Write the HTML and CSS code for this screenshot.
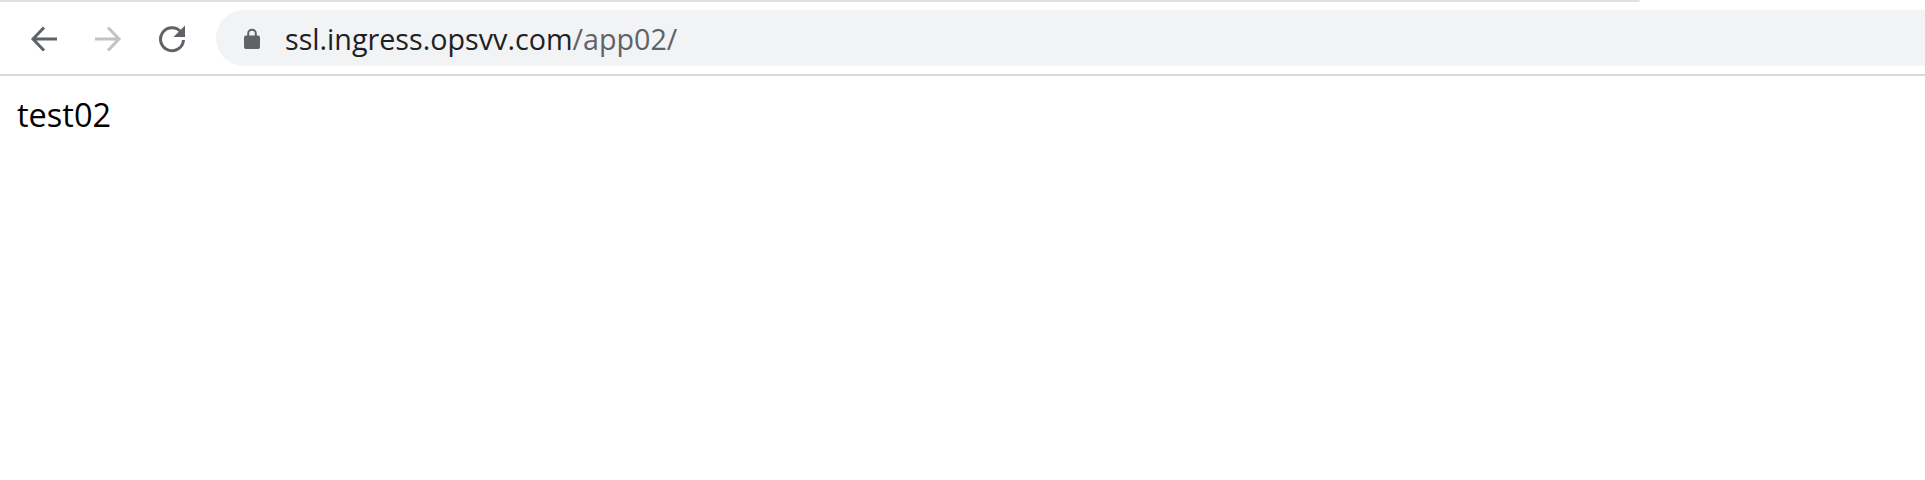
FILE: index.html
```html
<!doctype html>
<html lang="en">
<head>
  <meta charset="UTF-8">
  <title>test02</title>
  <link rel="stylesheet" href="styles.css">
</head>
<body>
  <div class="tabstrip"></div>
  <header class="toolbar">
    <svg class="navicon" viewBox="0 0 28 28" width="28" height="28">
      <path d="M27 14H3M14 2.500L3 14l11 11.500" fill="none" stroke="#5f6368" stroke-width="3"/>
    </svg>
    <svg class="navicon" viewBox="0 0 28 28" width="28" height="28">
      <path d="M1 14h24M14 2.500L25 14 14 25.500" fill="none" stroke="#c0c2c5" stroke-width="3"/>
    </svg>
    <svg class="navicon" viewBox="0 0 28 28" width="28" height="28">
      <path d="M22.500 6.500A11.500 11.500 0 1 0 25.500 15" fill="none" stroke="#5f6368" stroke-width="3"/>
      <path d="M27 0.500V12H15.500z" fill="#5f6368"/>
    </svg>
    <div class="omnibox">
      <svg class="lock" viewBox="0 0 16 21" width="16" height="21">
        <path d="M4.200 8.500V5.500a3.800 3.800 0 0 1 7.600 0v3" fill="none" stroke="#5f6368" stroke-width="2"/>
        <rect y="7.500" width="16" height="13.500" rx="2" fill="#5f6368"/>
      </svg>
      <span class="url">ssl.ingress.opsvv.com<span class="url-path">/app02/</span></span>
    </div>
  </header>
  <main class="content">test02</main>
</body>
</html>
```
FILE: styles.css
```css
body { margin: 0; background: #fff; color: #000; font-family: "Open Sans", "Noto Sans", sans-serif; overflow: hidden; }
.tabstrip { height: 2px; width: 1640px; background: #dee1e6; border-radius: 0 0 6px 0; }
.toolbar { display: flex; align-items: center; height: 72px; border-bottom: 2px solid #d9d9d9; padding-left: 30px; gap: 36px; box-sizing: content-box; }
.navicon { flex: none; margin-top: 1px; }
.omnibox { flex: 1; display: flex; align-items: center; height: 56px; margin-left: -6px; padding-left: 28px; gap: 25px; background: #f1f3f4; border-radius: 28px 0 0 28px; }
.lock { flex: none; }
.url { font-size: 28.7px; color: #202124; white-space: nowrap; }
.url-path { color: #5f6368; }
.content { padding: 17px; font-size: 32.5px; line-height: 44px; }
```
